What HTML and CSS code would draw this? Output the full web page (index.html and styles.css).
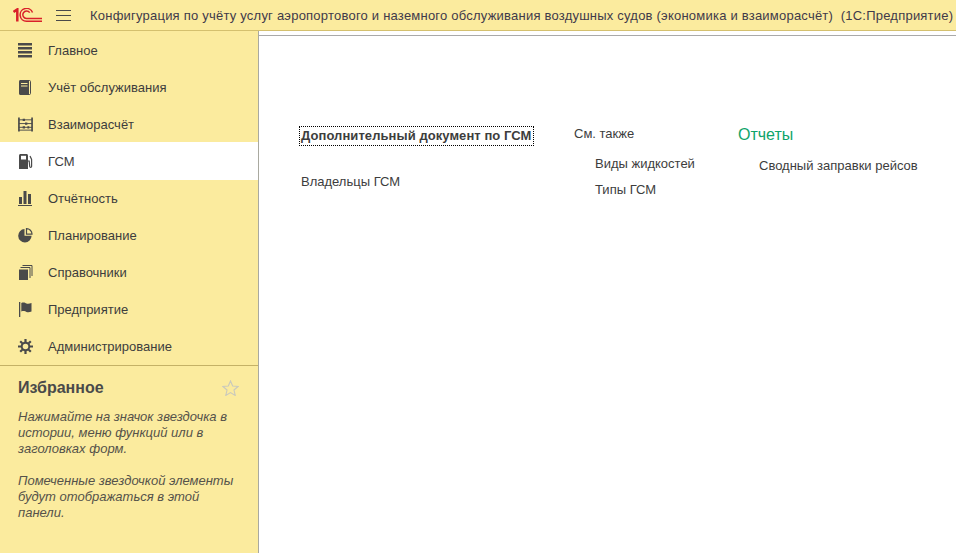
FILE: index.html
```html
<!DOCTYPE html>
<html lang="ru">
<head>
<meta charset="utf-8">
<title>1С:Предприятие</title>
<link rel="stylesheet" href="styles.css">
</head>
<body>
<header class="topbar">
  <svg class="logo" width="30" height="15" viewBox="0 0 30 15" fill="none" stroke="#d9202a" stroke-width="1.500">
    <path d="M.5 4 L4.300 1.400 V13.500" stroke-width="2.500"/>
    <path d="M29 13.200 H13.500 A6.400 6.400 0 1 1 19.500 4.500 M29 10.400 H13.500 A3.700 3.700 0 1 1 16.700 4.700"/>
  </svg>
  <svg class="burger" width="15" height="13" viewBox="0 0 15 13" stroke="#4a4a4a" stroke-width="1"><path d="M0 1.500H15M0 6.500H15M0 11.500H15"/></svg>
  <div class="title">Конфигурация по учёту услуг аэропортового и наземного обслуживания воздушных судов (экономика и взаиморасчёт)&nbsp; (1С:Предприятие)</div>
</header>
<div class="main">
  <aside class="sidebar">
    <nav class="menu">
      <a class="item"><svg class="ico" viewBox="0 0 15 15" fill="#4a4a4a"><path d="M0 0h14v2.500H0zM0 4h14v2.500H0zM0 8h14v2.500H0zM0 12h14v2.500H0z"/></svg>Главное</a>
      <a class="item"><svg class="ico" viewBox="0 0 15 15"><path fill="#4a4a4a" d="M2.500 0H11v15H2.500C1.600 15 1 14.400 1 13.500v-12C1 .6 1.600 0 2.500 0z"/><path fill="#fbeb9e" d="M3 3h6.500v1H3zM3 5.500h6.500v1H3z"/><path fill="none" stroke="#4a4a4a" d="M11 .5h.5c.6 0 1 .4 1 1v12c0 .6-.4 1-1 1H11"/></svg>Учёт обслуживания</a>
      <a class="item"><svg class="ico" viewBox="0 0 16 15" fill="none" stroke="#4a4a4a"><path stroke-width="1.800" d="M1 0v15M15 0v15"/><path stroke-width="1" d="M1 2.500h14M1 6.500h14M1 10.500h14M1 13.500h14"/><path stroke-width="2.400" d="M5 2.500h2.500M7.500 6.500h2.500M5 10.500h2.500M10 10.500h2"/></svg>Взаиморасчёт</a>
      <a class="item active"><svg class="ico" viewBox="0 0 15 15"><path fill="#4a4a4a" d="M1 1.500C1 .7 1.700 0 2.500 0h6C9.300 0 10 .7 10 1.500V15H1z"/><path fill="#fff" d="M3 1.800h5v3.700H3z"/><path fill="none" stroke="#4a4a4a" stroke-width="1.200" d="M10 7h1.200l.5 5.500c.1 1.200 1.800 1.200 1.900 0V5.500L12 2"/></svg>ГСМ</a>
      <a class="item"><svg class="ico" viewBox="0 0 15 15" fill="#4a4a4a"><path d="M1 6h3v7H1zM5.500 0h3v13h-3zM10 3h3v10h-3zM0 14h14v1H0z"/></svg>Отчётность</a>
      <a class="item"><svg class="ico" viewBox="0 0 15 15"><path fill="#4a4a4a" d="M6.500 1V7.800H13.600A6.700 6.700 0 1 1 6.500 1z"/><path fill="none" stroke="#4a4a4a" stroke-width="1.200" d="M8.500.6a5.500 5.500 0 0 1 5.500 5.500H8.500z"/></svg>Планирование</a>
      <a class="item"><svg class="ico" viewBox="0 0 15 15"><path fill="#4a4a4a" d="M1 4.500h9V15H1z"/><path fill="none" stroke="#4a4a4a" stroke-width="1" d="M2.500 2.500h9.500V13M4.500.5h9.500V11"/></svg>Справочники</a>
      <a class="item"><svg class="ico" viewBox="0 0 15 15" fill="#4a4a4a"><path d="M1 0h1.300v15H1zM3.300 1C6 0 7 1 8.500 1.500c1.500.4 3 .2 5-.5v8.500c-2 .8-3.500.9-5 .4-1.500-.5-2.500-1.300-5.200-.4z"/></svg>Предприятие</a>
      <a class="item"><svg class="ico" viewBox="0 0 15 15" fill="none" stroke="#4a4a4a"><circle cx="7.500" cy="7.500" r="3.800" stroke-width="2"/><path stroke-width="2.200" d="M7.500 0v3M7.500 12v3M0 7.500h3M12 7.500h3M2.200 2.200l2.100 2.100M10.700 10.700l2.100 2.100M2.200 12.800l2.100-2.100M10.700 4.300l2.100-2.100"/></svg>Администрирование</a>
    </nav>
    <section class="fav">
      <div class="fav-head">
        <h2 class="fav-title">Избранное</h2>
        <svg class="star" width="17" height="16" viewBox="0 0 18 17" fill="none" stroke="#c9c9bd" stroke-width="1.200"><path d="M9 1l2.300 5.400 5.700.5-4.300 3.800 1.300 5.700L9 13.400l-5 3 1.300-5.700L1 6.900l5.700-.5z"/></svg>
      </div>
      <p class="fav-text">Нажимайте на значок звездочка в истории, меню функций или в заголовках форм.</p>
      <p class="fav-text">Помеченные звездочкой элементы будут отображаться в этой панели.</p>
    </section>
  </aside>
  <main class="content">
    <div class="col col-a">
      <a class="link focus">Дополнительный документ по ГСМ</a>
      <a class="link owners">Владельцы ГСМ</a>
    </div>
    <div class="col col-b">
      <div class="see">См. также</div>
      <a class="sub first">Виды жидкостей</a>
      <a class="sub">Типы ГСМ</a>
    </div>
    <div class="col col-c">
      <div class="reports">Отчеты</div>
      <a class="sub">Сводный заправки рейсов</a>
    </div>
  </main>
</div>
</body>
</html>
```
FILE: styles.css
```css
* { box-sizing: border-box; }
html, body { margin: 0; height: 100%; }
body {
  width: 956px; height: 553px; overflow: hidden;
  font-family: "Liberation Sans", Arial, sans-serif;
  font-size: 13px; color: #3d3d3d; background: #fff;
  display: flex; flex-direction: column;
}
.topbar {
  height: 31px; flex: none; background: #fbeb9e;
  border-bottom: 1px solid #d4c06e;
  display: flex; align-items: center;
}
.logo { margin-left: 13px; flex: none; }
.burger { margin-left: 13px; flex: none; }
.title { margin-left: 19px; white-space: nowrap; letter-spacing: 0.22px; color: #3f3a4a; }
.main { flex: 1; display: flex; min-height: 0; }
.sidebar {
  width: 259px; flex: none; background: #fbeb9e;
  border-right: 1px solid #a9a9a0; padding-top: 1px;
  display: flex; flex-direction: column;
}
.menu { border-bottom: 1px solid #c4b166; }
.item {
  height: 37px; display: flex; align-items: center;
  padding-left: 18px; padding-bottom: 1px; color: #3d3d3d; background: #fbeb9e;
}
.item.active { background: #fff; height: 38px; margin-top: -1px; padding-top: 1px; }
.ico { width: 15px; height: 15px; margin-right: 15px; flex: none; }
.fav { padding: 13px 18px 0; }
.fav-head { display: flex; justify-content: space-between; align-items: center; }
.fav-title { margin: 0; font-size: 16px; font-weight: bold; color: #4a4a4a; line-height: 18px; }
.star { margin-right: 1px; }
.fav-text { margin: 12px 0 0; font-style: italic; color: #55524a; line-height: 16px; }
.fav-text + .fav-text { margin-top: 16px; }
.content {
  flex: 1; display: flex; align-items: flex-start;
  margin-top: 4px; border-top: 1px solid #a9a9a9; padding: 91px 0 0 41px;
}
.col { display: flex; flex-direction: column; align-items: flex-start; }
.col-a { width: 274px; }
.col-b { width: 164px; }
.link { line-height: 15px; padding: 1px; }
.focus { font-weight: bold; letter-spacing: 0.07px; outline: 1px dotted #000; line-height: 18px; padding: 0 1px; color: #3d3d3d; }
.owners { margin-top: 28px; }
.see { line-height: 15px; margin-top: -1px; }
.sub { display: block; margin-left: 21px; line-height: 15px; margin-top: 11px; }
.sub.first { margin-top: 15px; }
.reports { font-size: 16px; color: #0fa46a; line-height: 18px; margin-top: -1px; }
.col-c .sub { margin-top: 14px; }
```
